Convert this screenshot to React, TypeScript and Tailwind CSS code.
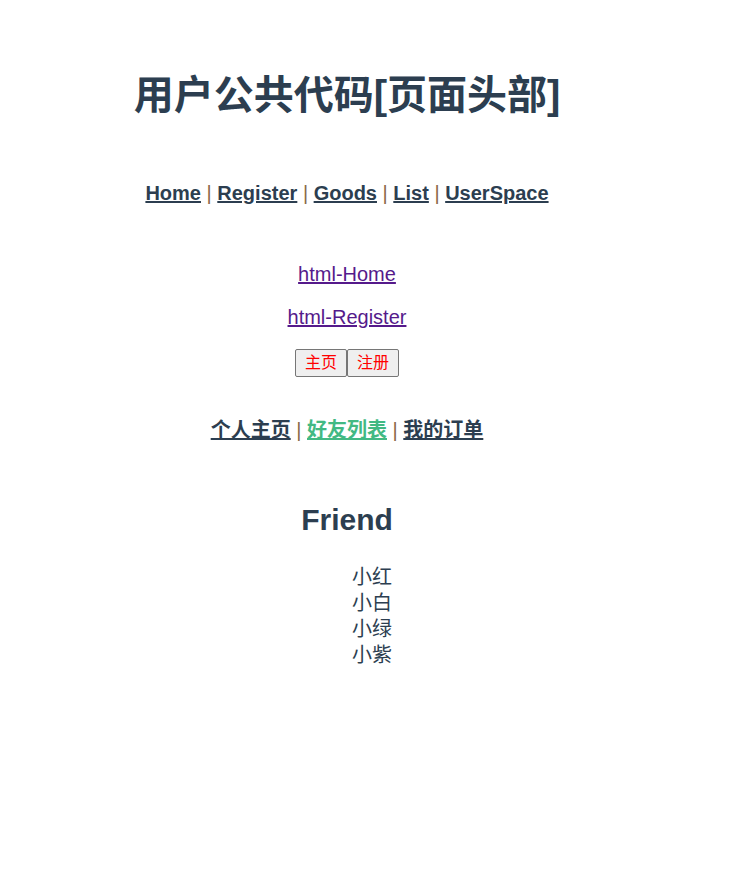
import React from "react";

const font = "font-['Liberation_Sans','Noto_Sans_CJK_SC',sans-serif]";

function Sep() {
  return <span className="text-[#8a6a48] font-normal"> | </span>;
}

export default function App() {
  const mainNav = ["Home", "Register", "Goods", "List", "UserSpace"];
  const friends = ["小红", "小白", "小绿", "小紫"];

  return (
    <div className={`w-[694px] text-center text-[#2c3e50] ${font}`}>
      <h1 className="mt-[71px] text-[40px] leading-[48px] font-bold">
        用户公共代码[页面头部]
      </h1>

      <nav className="mt-[62px] text-[20px] leading-[24px] font-bold">
        {mainNav.map((item, i) => (
          <React.Fragment key={item}>
            {i > 0 && <Sep />}
            <a href="#" className="underline text-[#2c3e50]">
              {item}
            </a>
          </React.Fragment>
        ))}
      </nav>

      <div className="mt-[57px] text-[20px] leading-[24px]">
        <a href="#" className="underline text-[#551a8b]">
          html-Home
        </a>
      </div>
      <div className="mt-[19px] text-[20px] leading-[24px]">
        <a href="#" className="underline text-[#551a8b]">
          html-Register
        </a>
      </div>

      <div className="mt-[20px] flex justify-center">
        <button className="w-[52px] h-[28px] text-[16px] text-[#ff0000] bg-[#efefef] border border-[#767676] rounded-[2px]">
          主页
        </button>
        <button className="w-[52px] h-[28px] text-[16px] text-[#ff0000] bg-[#efefef] border border-[#767676] rounded-[2px]">
          注册
        </button>
      </div>

      <nav className="mt-[41px] text-[20px] leading-[24px] font-bold">
        <a href="#" className="underline text-[#2c3e50]">
          个人主页
        </a>
        <Sep />
        <a href="#" className="underline text-[#42b983]">
          好友列表
        </a>
        <Sep />
        <a href="#" className="underline text-[#2c3e50]">
          我的订单
        </a>
      </nav>

      <h2 className="mt-[60px] text-[30px] leading-[36px] font-bold">Friend</h2>

      <ul className="mt-[26px] pl-[50px] text-[20px] leading-[26px] list-none">
        {friends.map((f) => (
          <li key={f}>{f}</li>
        ))}
      </ul>
    </div>
  );
}
